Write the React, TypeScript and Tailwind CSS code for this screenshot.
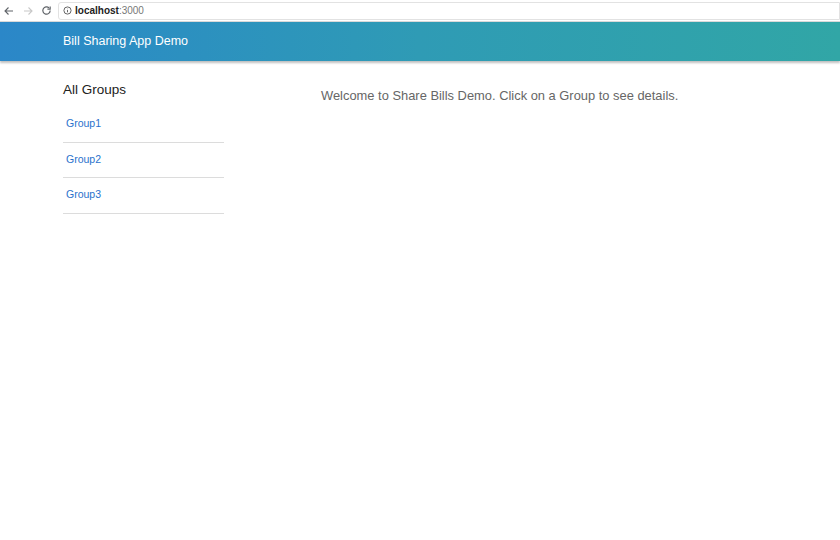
import React from 'react';

const groups = ['Group1', 'Group2', 'Group3'];

const BrowserBar: React.FC = () => (
  <div className="h-[22px] flex items-center bg-white border-b border-[#d9d9d9]">
    <div className="flex items-center pl-[3px]">
      <svg width="12" height="12" viewBox="0 0 24 24" fill="none" stroke="#5f6368" strokeWidth="2.2">
        <path d="M20 12H5M11 5l-7 7 7 7" />
      </svg>
      <svg width="12" height="12" viewBox="0 0 24 24" fill="none" stroke="#c8c8c8" strokeWidth="2.2" className="ml-[7px]">
        <path d="M4 12h15M13 5l7 7-7 7" />
      </svg>
      <svg width="11" height="11" viewBox="0 0 24 24" fill="none" stroke="#5f6368" strokeWidth="2.6" className="ml-[7px]">
        <path d="M20 12a8 8 0 1 1-2.5-5.8" />
        <path d="M20 3v6h-6" />
      </svg>
    </div>
    <div className="ml-[6px] flex-1 h-[18px] flex items-center rounded-l-[3px] border border-[#e2e2e2] bg-white pl-[4px]">
      <svg width="9" height="9" viewBox="0 0 20 20" fill="none" stroke="#555" strokeWidth="2">
        <circle cx="10" cy="10" r="8" />
        <path d="M10 9v5M10 6v1" />
      </svg>
      <span className="ml-[3px] text-[10px] text-[#222] font-bold">
        localhost<span className="text-[#777] font-normal">:3000</span>
      </span>
    </div>
  </div>
);

const App: React.FC = () => {
  return (
    <div className="min-h-screen bg-white font-['Liberation_Sans',Arial,sans-serif]">
      <BrowserBar />

      {/* Header */}
      <div className="h-[39px] flex items-center px-[63px] bg-gradient-to-r from-[#2b87c8] via-[#2f9bb5] to-[#31a6a6] shadow-[0_2px_2px_rgba(0,0,0,0.25)]">
        <span className="text-white text-[12.5px]">Bill Sharing App Demo</span>
      </div>

      <div className="flex pl-[63px] pt-[20px]">
        {/* Sidebar */}
        <div className="w-[161px]">
          <h2 className="text-[13.5px] text-[#222] leading-[17px]">All Groups</h2>
          <ul className="mt-[9px]">
            {groups.map((g) => (
              <li key={g} className="h-[35.5px] flex items-center pl-[3px] border-b border-[#dcdcdc]">
                <a className="text-[10.5px] text-[#2a72cc]">{g}</a>
              </li>
            ))}
          </ul>
        </div>

        {/* Main */}
        <div className="ml-[97px] pt-[6px]">
          <p className="text-[12.9px] text-[#666] leading-[18px]">
            Welcome to Share Bills Demo. Click on a Group to see details.
          </p>
        </div>
      </div>
    </div>
  );
};

export default App;
